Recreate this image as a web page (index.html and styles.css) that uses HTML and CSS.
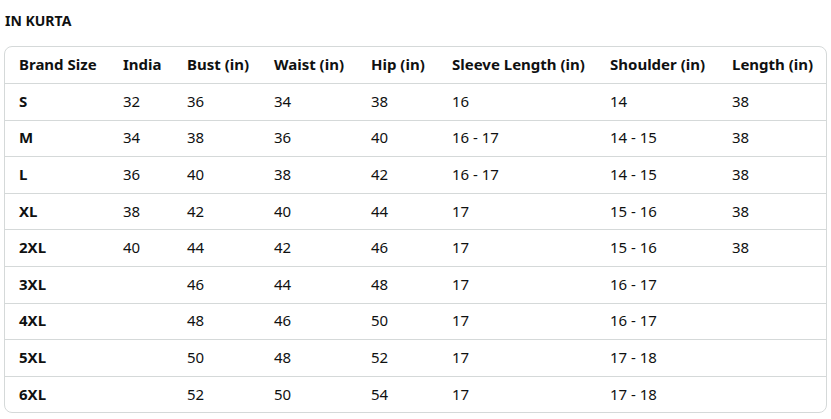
FILE: index.html
```html
<!DOCTYPE html>
<html>
<head>
<meta charset="utf-8">
<link rel="stylesheet" href="styles.css">
</head>
<body>
<h2 class="title">IN KURTA</h2>
<div class="card">
<table class="sizes">
<colgroup>
<col class="c1"><col class="c2"><col class="c3"><col class="c4"><col class="c5"><col class="c6"><col class="c7"><col class="c8">
</colgroup>
<thead>
<tr><th>Brand Size</th><th>India</th><th>Bust (in)</th><th>Waist (in)</th><th>Hip (in)</th><th>Sleeve Length (in)</th><th>Shoulder (in)</th><th>Length (in)</th></tr>
</thead>
<tbody>
<tr><th>S</th><td>32</td><td>36</td><td>34</td><td>38</td><td>16</td><td>14</td><td>38</td></tr>
<tr><th>M</th><td>34</td><td>38</td><td>36</td><td>40</td><td>16 - 17</td><td>14 - 15</td><td>38</td></tr>
<tr><th>L</th><td>36</td><td>40</td><td>38</td><td>42</td><td>16 - 17</td><td>14 - 15</td><td>38</td></tr>
<tr><th>XL</th><td>38</td><td>42</td><td>40</td><td>44</td><td>17</td><td>15 - 16</td><td>38</td></tr>
<tr><th>2XL</th><td>40</td><td>44</td><td>42</td><td>46</td><td>17</td><td>15 - 16</td><td>38</td></tr>
<tr><th>3XL</th><td></td><td>46</td><td>44</td><td>48</td><td>17</td><td>16 - 17</td><td></td></tr>
<tr><th>4XL</th><td></td><td>48</td><td>46</td><td>50</td><td>17</td><td>16 - 17</td><td></td></tr>
<tr><th>5XL</th><td></td><td>50</td><td>48</td><td>52</td><td>17</td><td>17 - 18</td><td></td></tr>
<tr><th>6XL</th><td></td><td>52</td><td>50</td><td>54</td><td>17</td><td>17 - 18</td><td></td></tr>
</tbody>
</table>
</div>
</body>
</html>
```
FILE: styles.css
```css
html, body { margin: 0; padding: 0; background: #fff; }
body {
  font-family: "Noto Sans", "Liberation Sans", sans-serif;
  color: #0f1111;
  padding: 0 4px;
}
.title {
  margin: 0;
  padding-top: 12px;
  padding-left: 1px;
  height: 46px;
  box-sizing: border-box;
  font-size: 14px;
  font-weight: 700;
  line-height: 18px;
}
.card {
  width: 823px;
  border: 1px solid #d5d9d9;
  border-radius: 8px;
  overflow: hidden;
  box-sizing: border-box;
}
.sizes {
  width: 100%;
  border-collapse: collapse;
  table-layout: fixed;
  font-size: 15px;
}
.c1 { width: 104px; }
.c2 { width: 64px; }
.c3 { width: 87px; }
.c4 { width: 97px; }
.c5 { width: 81px; }
.c6 { width: 158px; }
.c7 { width: 122px; }
.c8 { width: 108px; }
.sizes th, .sizes td {
  text-align: left;
  padding: 0 0 2px 14px;
  height: 33.6px;
  line-height: 20px;
  white-space: nowrap;
  border-top: 1px solid #d5d9d9;
}
.sizes thead th { border-top: none; font-weight: 700; height: 34px; }
.sizes tbody th { font-weight: 700; }
.sizes td { font-weight: 400; }
```
